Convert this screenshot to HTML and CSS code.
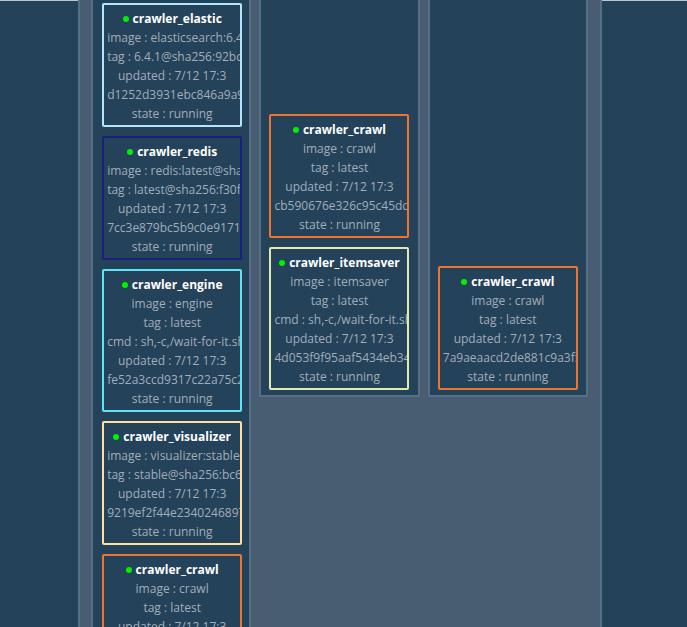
FILE: index.html
```html
<!DOCTYPE html>
<html>
<head>
<meta charset="utf-8">
<link rel="stylesheet" href="styles.css">
</head>
<body>
<div class="topline"></div>
<div class="board">
  <div class="column col-first">
    <div class="card c-elastic">
      <div class="title"><span class="dot"></span>crawler_elastic</div>
      <div class="line">image : elasticsearch:6.4.1</div>
      <div class="line">tag : 6.4.1@sha256:92bc3e1c0f</div>
      <div class="line">updated : 7/12 17:3</div>
      <div class="line">d1252d3931ebc846a9a9f0c1</div>
      <div class="line">state : running</div>
    </div>
    <div class="card c-redis">
      <div class="title"><span class="dot"></span>crawler_redis</div>
      <div class="line">image : redis:latest@sha256</div>
      <div class="line">tag : latest@sha256:f30f1a2b</div>
      <div class="line">updated : 7/12 17:3</div>
      <div class="line">7cc3e879bc5b9c0e91714a2d</div>
      <div class="line">state : running</div>
    </div>
    <div class="card c-engine">
      <div class="title"><span class="dot"></span>crawler_engine</div>
      <div class="line">image : engine</div>
      <div class="line">tag : latest</div>
      <div class="line">cmd : sh,-c,/wait-for-it.sh</div>
      <div class="line">updated : 7/12 17:3</div>
      <div class="line">fe52a3ccd9317c22a75c2b1e</div>
      <div class="line">state : running</div>
    </div>
    <div class="card c-visualizer">
      <div class="title"><span class="dot"></span>crawler_visualizer</div>
      <div class="line">image : visualizer:stable</div>
      <div class="line">tag : stable@sha256:bc6d1e</div>
      <div class="line">updated : 7/12 17:3</div>
      <div class="line">9219ef2f44e2340246897a1b</div>
      <div class="line">state : running</div>
    </div>
    <div class="card c-crawl">
      <div class="title"><span class="dot"></span>crawler_crawl</div>
      <div class="line">image : crawl</div>
      <div class="line">tag : latest</div>
      <div class="line">updated : 7/12 17:3</div>
      <div class="line">0b3f1e2d9a8c7b6e5f4d3c2b</div>
      <div class="line">state : running</div>
    </div>
  </div>
  <div class="column col-short">
    <div class="card c-crawl">
      <div class="title"><span class="dot"></span>crawler_crawl</div>
      <div class="line">image : crawl</div>
      <div class="line">tag : latest</div>
      <div class="line">updated : 7/12 17:3</div>
      <div class="line">cb590676e326c95c45dd7e1a</div>
      <div class="line">state : running</div>
    </div>
    <div class="card c-itemsaver">
      <div class="title"><span class="dot"></span>crawler_itemsaver</div>
      <div class="line">image : itemsaver</div>
      <div class="line">tag : latest</div>
      <div class="line">cmd : sh,-c,/wait-for-it.sh</div>
      <div class="line">updated : 7/12 17:3</div>
      <div class="line">4d053f9f95aaf5434eb34c9d</div>
      <div class="line">state : running</div>
    </div>
  </div>
  <div class="column col-short">
    <div class="card c-crawl">
      <div class="title"><span class="dot"></span>crawler_crawl</div>
      <div class="line">image : crawl</div>
      <div class="line">tag : latest</div>
      <div class="line">updated : 7/12 17:3</div>
      <div class="line">7a9aeaacd2de881c9a3f5b2e</div>
      <div class="line">state : running</div>
    </div>
  </div>
</div>
</body>
</html>
```

FILE: styles.css
```css
html, body {
  margin: 0;
  padding: 0;
  height: 100%;
  overflow: hidden;
}
body {
  background: #24425a;
  font-family: "Open Sans", "DejaVu Sans", sans-serif;
  font-size: 12px;
}
.topline {
  height: 1px;
  background: #c4c4c4;
}
.board {
  margin: -20px 0 0 78px;
  width: 524px;
  box-sizing: border-box;
  background: #485d71;
  border: 2px solid #566f86;
  padding: 0 12px 0 11px;
  display: grid;
  grid-template-columns: repeat(3, 1fr);
  column-gap: 8px;
  align-items: start;
  min-height: 700px;
}
.column {
  background: #24425a;
  border: 2px solid #566f86;
  box-sizing: border-box;
  display: flex;
  flex-direction: column;
  align-items: center;
  gap: 9px;
  padding: 0 0 5px;
}
.col-first {
  padding: 18px 0 5px 2px;
}
.col-short {
  height: 414px;
  justify-content: flex-end;
}
.card {
  width: 140px;
  box-sizing: border-box;
  border: 2px solid #b3e5fc;
  border-radius: 2px;
  padding: 4px 3px 2px;
  line-height: 19px;
  text-align: center;
  white-space: nowrap;
  overflow: hidden;
  color: #a3adb8;
  flex-shrink: 0;
}
.title {
  color: #ffffff;
  font-weight: 700;
}
.dot {
  display: inline-block;
  width: 6px;
  height: 6px;
  border-radius: 50%;
  background: #00f000;
  margin-right: 4px;
  vertical-align: 1px;
}
.c-elastic { border-color: #b3e5fc; }
.c-redis { border-color: #1a1f7a; }
.c-engine { border-color: #5ee4f2; }
.c-visualizer { border-color: #ffe0a2; }
.c-crawl { border-color: #f0732e; }
.c-itemsaver { border-color: #dfecaa; }
```
